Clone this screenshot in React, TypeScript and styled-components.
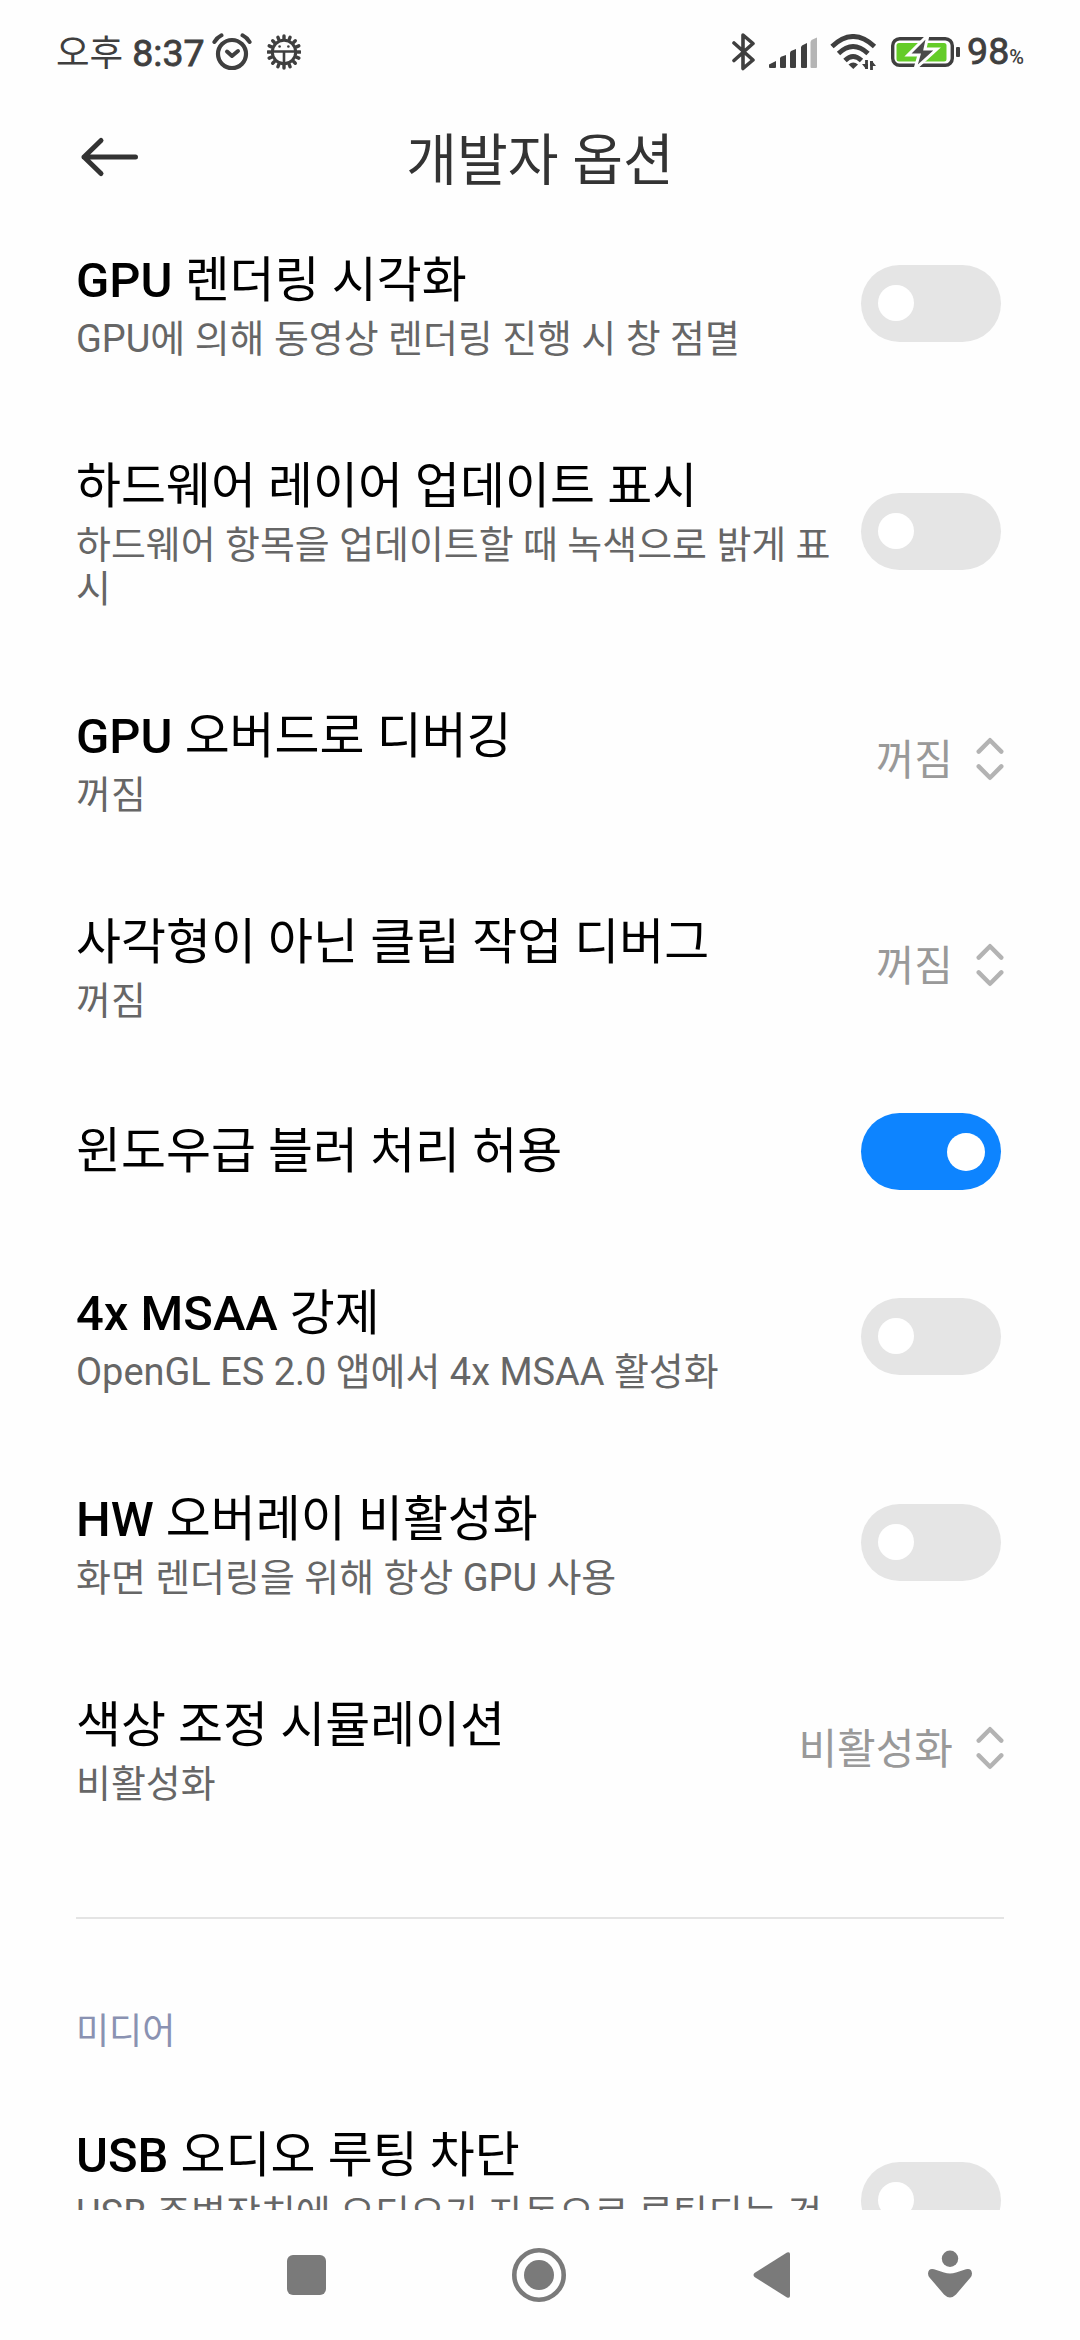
import React from 'react';
import styled, { createGlobalStyle } from 'styled-components';

const GlobalStyle = createGlobalStyle`
  * { box-sizing: border-box; }
  html, body { margin: 0; padding: 0; background: #fefefe; }
  body {
    font-family: Roboto, "Noto Sans CJK KR", sans-serif;
    overflow: hidden;
  }
`;

const Screen = styled.div`
  width: 1080px;
  height: 2340px;
  display: flex;
  flex-direction: column;
  background: #fefefe;
  overflow: hidden;
`;

const StatusBar = styled.header`
  height: 100px;
  flex: none;
  display: flex;
  justify-content: space-between;
  padding: 24px 56px 20px 56px;
  color: #3f3f3f;
`;

const StatusGroup = styled.div`
  display: flex;
  align-items: center;
`;

const Clock = styled.div`
  width: 148px;
  font-size: 36.5px;
  line-height: 56px;
  padding-top: 2px;
  white-space: pre;
`;

const ClockDigits = styled.span`
  font-size: 37.5px;
  -webkit-text-stroke: 0.8px #3f3f3f;
`;

const Latin = styled.span`
  font-weight: 500;
`;

const Icon = styled.svg<{ $gap?: number }>`
  display: block;
  flex: none;
  margin-left: ${(p) => p.$gap ?? 0}px;
`;

const Percent = styled.div`
  display: flex;
  align-items: baseline;
  margin-left: 7px;
  padding-top: 4px;
  font-size: 37.5px;
  line-height: 56px;
  -webkit-text-stroke: 0.8px #3f3f3f;
`;

const PercentSign = styled.span`
  font-size: 20px;
  font-weight: 500;
  -webkit-text-stroke: 0;
`;

const TitleBar = styled.div`
  height: 100px;
  flex: none;
  display: grid;
  grid-template-columns: 80px 1fr 80px;
  align-items: center;
  padding: 13px 70px 0;
`;

const PageTitle = styled.h1`
  margin: 0;
  font-size: 55.2px;
  font-weight: 400;
  line-height: 80px;
  text-align: center;
  color: #333;
  padding-top: 8px;
`;

const Settings = styled.main`
  flex: 1;
  min-height: 0;
  overflow: hidden;
`;

const Row = styled.section`
  display: flex;
  align-items: center;
  justify-content: space-between;
  padding: 50px 76px;
`;

const RowText = styled.div<{ $single?: boolean }>`
  width: 765px;
  padding-top: ${(p) => (p.$single ? 3 : 0)}px;
`;

const RowTitle = styled.div`
  font-size: 48.9px;
  line-height: 62px;
  color: #000;
  white-space: nowrap;
`;

const RowSummary = styled.div`
  margin: 5px 0 -5px;
  font-size: 37.95px;
  line-height: 44px;
  color: #666;
  word-break: break-all;
`;

const Track = styled.div<{ $on?: boolean }>`
  width: 140px;
  height: 77px;
  flex: none;
  margin: ${(p) => (p.$on ? '-9px 3px -11px 0' : '-10px 3px -10px 0')};
  border-radius: 39px;
  display: flex;
  align-items: center;
  justify-content: ${(p) => (p.$on ? 'flex-end' : 'flex-start')};
  padding: 0 16px 0 17px;
  background: ${(p) => (p.$on ? '#0d84ff' : '#e5e5e5')};
`;

const Knob = styled.div<{ $on?: boolean }>`
  width: ${(p) => (p.$on ? 38 : 36)}px;
  height: ${(p) => (p.$on ? 38 : 36)}px;
  border-radius: 50%;
  background: #fff;
`;

const Choice = styled.div`
  display: flex;
  align-items: center;
  flex: none;
  color: #999;
`;

const ChoiceValue = styled.span`
  padding-top: 4px;
  font-size: 42px;
  line-height: 56px;
`;

const Divider = styled.hr`
  height: 2px;
  margin: 66px 76px 0;
  border: 0;
  background: #e4e4e4;
`;

const SectionLabel = styled.h2`
  margin: 0;
  padding: 85px 76px 0;
  height: 156px;
  font-size: 36px;
  font-weight: 400;
  line-height: 56px;
  color: #8a92b2;
`;

const NavBar = styled.nav`
  height: 130px;
  flex: none;
  display: flex;
  align-items: center;
  padding-left: 276px;
`;

function Switch({ on }: { on?: boolean }) {
  return (
    <Track $on={on} role="switch" aria-checked={!!on}>
      <Knob $on={on} />
    </Track>
  );
}

function Select({ value }: { value: string }) {
  return (
    <Choice>
      <ChoiceValue>{value}</ChoiceValue>
      <Icon $gap={23} width="28" height="44" viewBox="0 0 28 44" fill="none" stroke="#b3b3b3" strokeWidth="4.4" strokeLinecap="round" strokeLinejoin="round">
        <path d="M2.7 14.6 14 3.2 25.3 14.6M2.7 29.4 14 40.8 25.3 29.4" />
      </Icon>
    </Choice>
  );
}

interface Item {
  latin?: string;
  title: string;
  summary?: string;
  on?: boolean;
  value?: string;
}

const rendering: Item[] = [
  { latin: 'GPU', title: ' 렌더링 시각화', summary: 'GPU에 의해 동영상 렌더링 진행 시 창 점멸' },
  { title: '하드웨어 레이어 업데이트 표시', summary: '하드웨어 항목을 업데이트할 때 녹색으로 밝게 표시' },
  { latin: 'GPU', title: ' 오버드로 디버깅', summary: '꺼짐', value: '꺼짐' },
  { title: '사각형이 아닌 클립 작업 디버그', summary: '꺼짐', value: '꺼짐' },
  { title: '윈도우급 블러 처리 허용', on: true },
  { latin: '4x MSAA', title: ' 강제', summary: 'OpenGL ES 2.0 앱에서 4x MSAA 활성화' },
  { latin: 'HW', title: ' 오버레이 비활성화', summary: '화면 렌더링을 위해 항상 GPU 사용' },
  { title: '색상 조정 시뮬레이션', summary: '비활성화', value: '비활성화' },
];

const media: Item[] = [
  { latin: 'USB', title: ' 오디오 루팅 차단', summary: 'USB 주변장치에 오디오가 자동으로 루팅되는 것을 차단' },
];

function SettingRow({ item }: { item: Item }) {
  return (
    <Row>
      <RowText $single={!item.summary}>
        <RowTitle>
          {item.latin && <Latin>{item.latin}</Latin>}
          {item.title}
        </RowTitle>
        {item.summary && <RowSummary>{item.summary}</RowSummary>}
      </RowText>
      {item.value ? <Select value={item.value} /> : <Switch on={item.on} />}
    </Row>
  );
}

const teeth = Array.from({ length: 16 }, (_, i) => i * 22.5);

export default function App() {
  return (
    <>
      <GlobalStyle />
      <Screen>
        <StatusBar>
          <StatusGroup>
            <Clock>
              오후 <ClockDigits>8:37</ClockDigits>
            </Clock>
            <Icon $gap={8} width="40" height="38" viewBox="0 0 40 38" fill="none" stroke="#3f3f3f" strokeLinecap="round">
              <circle cx="20" cy="21" r="14" strokeWidth="4.2" />
              <path d="M2.4 9Q5 4.500 9.500 2.300M30.500 2.300Q35 4.500 37.600 9" strokeWidth="4" />
              <path d="M15 18.500 20 23 26 18" strokeWidth="4" strokeLinejoin="round" />
            </Icon>
            <Icon $gap={15} width="34" height="36" viewBox="0 0 34 36" fill="none" stroke="#3f3f3f">
              {teeth.map((a) => (
                <path key={a} d="M17 4.500V2" strokeWidth="3.400" strokeLinecap="round" transform={`rotate(${a} 17 18)`} />
              ))}
              <circle cx="17" cy="18" r="11.700" strokeWidth="3" />
              <path d="M5 17.500H29M17 17.500V30" strokeWidth="2.600" />
              <circle cx="12.600" cy="12.500" r="1.300" fill="#3f3f3f" stroke="none" />
              <circle cx="21.400" cy="12.500" r="1.300" fill="#3f3f3f" stroke="none" />
            </Icon>
          </StatusGroup>
          <StatusGroup>
            <Icon width="24" height="40" viewBox="0 0 24 40" fill="none" stroke="#3f3f3f" strokeWidth="3.600" strokeLinejoin="round" strokeLinecap="round">
              <path d="M2 11 21 28 11 36.500V3L21 11.500 2 28.500" />
            </Icon>
            <Icon $gap={13} width="49" height="34" viewBox="0 0 49 34" fill="#3f3f3f">
              <path d="M0 32V29.500L7 26V32Q7 33 6 33H1Q0 33 0 32Z" />
              <path d="M11 32V23L12 21.800 17 20V32Q17 33 16 33H12Q11 33 11 32Z" />
              <path d="M21 32V17.500L22 16 27 14V32Q27 33 26 33H22Q21 33 21 32Z" />
              <path d="M32 32V12L33 10.500 38 8V32Q38 33 37 33H33Q32 33 32 32Z" />
              <path d="M41.500 32V7L42.500 5 48 2.500V32Q48 33 47 33H42.500Q41.500 33 41.500 32Z" fill="#b5b5b5" />
            </Icon>
            <Icon $gap={12} width="47" height="36" viewBox="0 0 47 36" fill="none" stroke="#3f3f3f" strokeWidth="4.800">
              <path d="M2 12.500Q23 -7.500 44.500 12.500M8.500 19.500Q23 5.500 38 19.500M15 26.500Q23 18.500 31.500 26.500" />
              <path d="M18.500 30.500Q23.300 26.500 28 30.500L23.300 35Z" fill="#3f3f3f" stroke="none" />
              <path d="M36.500 35V26M41.500 27V36" strokeWidth="2.800" />
              <path d="M32 30 36 35H37.900V30ZM40 27V32H46L42 27Z" fill="#3f3f3f" stroke="none" />
            </Icon>
            <Icon $gap={14} width="69" height="34" viewBox="0 0 69 34">
              <rect x="1.700" y="3.700" width="59.600" height="26.600" rx="7" fill="none" stroke="#3f3f3f" strokeWidth="3.400" />
              <rect x="5.500" y="8" width="50" height="18.500" rx="2.500" fill="#64cc28" />
              <rect x="65" y="12" width="4" height="10" rx="1" fill="#3f3f3f" />
              <path d="M37 0 17 20H28L24 34 46 14H34Z" fill="#4a4a4a" stroke="#fefefe" strokeWidth="3" />
            </Icon>
            <Percent>
              98<PercentSign>%</PercentSign>
            </Percent>
          </StatusGroup>
        </StatusBar>
        <TitleBar>
          <Icon $gap={10} width="60" height="42" viewBox="0 0 60 42" fill="none" stroke="#333" strokeWidth="5" strokeLinecap="round" strokeLinejoin="round">
            <path d="M55.500 21H4M21 4.500 4 21 21 37.500" />
          </Icon>
          <PageTitle>개발자 옵션</PageTitle>
        </TitleBar>
        <Settings>
          {rendering.map((item) => (
            <SettingRow key={item.title} item={item} />
          ))}
          <Divider />
          <SectionLabel>미디어</SectionLabel>
          {media.map((item) => (
            <SettingRow key={item.title} item={item} />
          ))}
        </Settings>
        <NavBar>
          <Icon width="60" height="60" viewBox="276 2245 60 60" fill="#7a7a7a">
            <rect x="287" y="2255" width="39" height="40" rx="6" />
          </Icon>
          <Icon $gap={173} width="60" height="60" viewBox="509 2245 60 60" fill="#7a7a7a">
            <circle cx="539" cy="2275" r="24.700" fill="none" stroke="#7a7a7a" strokeWidth="4.600" />
            <circle cx="539" cy="2275" r="15" />
          </Icon>
          <Icon $gap={175} width="60" height="60" viewBox="744 2245 60 60" fill="#7a7a7a">
            <path d="M754.500 2273 787 2252.500Q790 2251.500 790 2254V2296Q790 2298.500 787 2297.500L754.500 2277Q752.500 2275 754.500 2273Z" />
          </Icon>
          <Icon $gap={116} width="60" height="60" viewBox="920 2245 60 60" fill="#7a7a7a">
            <circle cx="950" cy="2258.700" r="8.200" />
            <path d="M928 2273.500Q928.500 2268 934 2269.300L944 2272.600Q950 2274.500 956 2272.600L966 2269.300Q971.500 2268 972 2273.500Q972 2275.500 970.500 2277.500L956 2294.500Q950 2300.500 944 2294.500L929.500 2277.500Q928 2275.500 928 2273.500Z" />
          </Icon>
        </NavBar>
      </Screen>
    </>
  );
}
